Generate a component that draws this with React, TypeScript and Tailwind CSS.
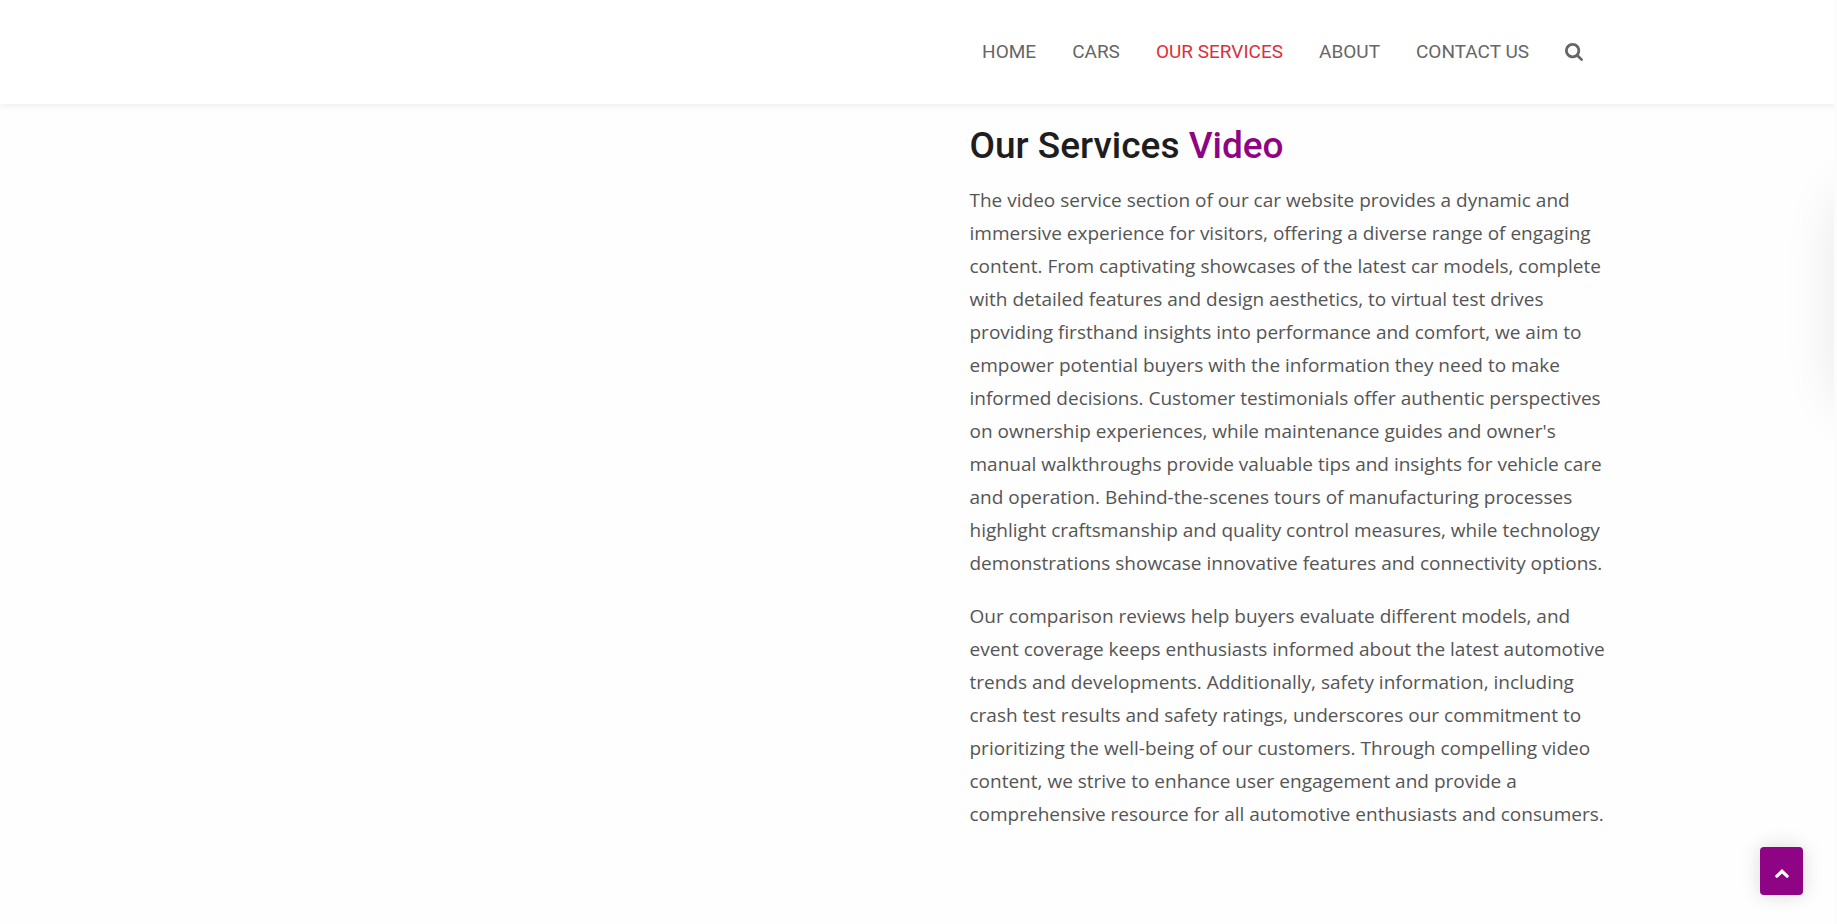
const links = ["HOME", "CARS", "OUR SERVICES", "ABOUT", "CONTACT US"];

function SearchIcon() {
  return (
    <svg viewBox="0 0 1664 1664" className="size-[18px]" fill="currentColor" aria-hidden="true">
      <path d="M1152 704q0-185-131.5-316.5t-316.5-131.5-316.5 131.5-131.5 316.5 131.5 316.5 316.5 131.5 316.5-131.5 131.5-316.5zm512 832q0 52-38 90t-90 38q-54 0-90-38l-343-342q-179 124-399 124-143 0-273.5-55.5t-225-150-150-225-55.5-273.5 55.5-273.5 150-225 225-150 273.5-55.5 273.5 55.5 225 150 150 225 55.5 273.5q0 220-124 399l343 343q37 37 37 90z" />
    </svg>
  );
}

function ChevronUpIcon() {
  return (
    <svg viewBox="0 0 14 9" className="h-[9px] w-[14px]" fill="none" stroke="currentColor" strokeWidth="3.2" strokeLinecap="round" strokeLinejoin="miter" aria-hidden="true">
      <path d="M1.9 7.2 7 2.3l5.1 4.9" />
    </svg>
  );
}

export default function App() {
  return (
    <div className="relative min-h-screen overflow-hidden bg-[#fefefe] font-['Open_Sans',sans-serif] text-[#555]">
      <header className="bg-white shadow-[0_2px_6px_rgba(0,0,0,0.07)]">
        <div className="mx-auto flex h-[104px] max-w-[1425px] items-center justify-end pr-12">
          <nav className="flex items-center gap-9 font-['Roboto',sans-serif] text-[19px] leading-7 text-[#666]">
            {links.map((label) => (
              <a key={label} href="#" className={label === "OUR SERVICES" ? "text-[#dc2f3a]" : "hover:text-[#dc2f3a]"}>
                {label}
              </a>
            ))}
            <button type="button" aria-label="Search">
              <SearchIcon />
            </button>
          </nav>
        </div>
      </header>
      <main className="mx-auto grid max-w-[1425px] grid-cols-2 px-[19px]">
        <section className="col-start-2 pl-[51px] pt-4">
          <h1 className="font-['Roboto',sans-serif] text-[37px] font-medium leading-[52px] text-[#1e1e1e]">
            Our Services <span className="text-[#8e0485]">Video</span>
          </h1>
          <p className="mt-3 text-[19px] leading-[33px]">
            The video service section of our car website provides a dynamic and immersive experience for visitors,
            offering a diverse range of engaging content. From captivating showcases of the latest car models,
            complete with detailed features and design aesthetics, to virtual test drives providing firsthand
            insights into performance and comfort, we aim to empower potential buyers with the information they need
            to make informed decisions. Customer testimonials offer authentic perspectives on ownership experiences,
            while maintenance guides and owner's manual walkthroughs provide valuable tips and insights for vehicle
            care and operation. Behind-the-scenes tours of manufacturing processes highlight craftsmanship and
            quality control measures, while technology demonstrations showcase innovative features and connectivity
            options.
          </p>
          <p className="mt-5 text-[19px] leading-[33px]">
            Our comparison reviews help buyers evaluate different models, and event coverage keeps enthusiasts
            informed about the latest automotive trends and developments. Additionally, safety information,
            including crash test results and safety ratings, underscores our commitment to prioritizing the
            well-being of our customers. Through compelling video content, we strive to enhance user engagement and
            provide a comprehensive resource for all automotive enthusiasts and consumers.
          </p>
        </section>
      </main>
      <div className="absolute top-[200px] -right-14 h-[200px] w-[50px] shadow-[0_0_60px_rgba(0,0,0,0.12)]" aria-hidden="true" />
      <div className="absolute inset-y-0 right-0 w-[3px] bg-[#fcfcfc]" aria-hidden="true" />
      <button
        type="button"
        aria-label="Back to top"
        className="fixed right-[34px] bottom-[29px] flex h-12 w-[43px] items-center justify-center rounded-[4px] bg-[#8e0485] pt-1 text-white shadow-[0_0_20px_rgba(0,0,0,0.15)]"
      >
        <ChevronUpIcon />
      </button>
    </div>
  );
}
